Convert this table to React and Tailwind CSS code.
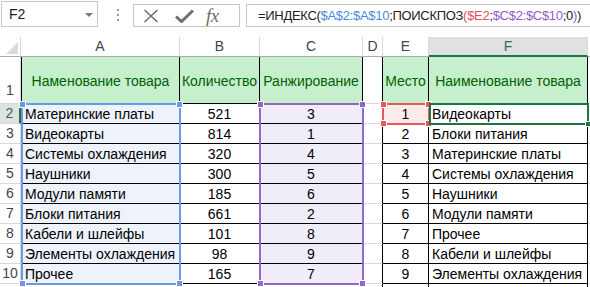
import React from 'react';

const leftRows = [
  ['Материнские платы', 521, 3],
  ['Видеокарты', 814, 1],
  ['Системы охлаждения', 320, 4],
  ['Наушники', 300, 5],
  ['Модули памяти', 185, 6],
  ['Блоки питания', 661, 2],
  ['Кабели и шлейфы', 101, 8],
  ['Элементы охлаждения', 98, 9],
  ['Прочее', 165, 7],
];

const rightRows = [
  'Видеокарты',
  'Блоки питания',
  'Материнские платы',
  'Системы охлаждения',
  'Наушники',
  'Модули памяти',
  'Прочее',
  'Кабели и шлейфы',
  'Элементы охлаждения',
];

const Handle = ({ className }) => (
  <div className={`absolute w-[7px] h-[7px] border border-white ${className}`} />
);

const FormulaBar = () => (
  <div className="flex h-[37px] items-start">
    {/* поле имени */}
    <div className="relative mt-px ml-px w-[97px] h-[26px] border border-[#c6c6c6] flex items-center pl-[7px] text-[14px] text-[#222]">
      F2
      <svg className="absolute right-[4px] top-[11px]" width="8" height="5" viewBox="0 0 8 5">
        <path d="M0 0h8L4 4z" fill="#7a7a7a" />
      </svg>
    </div>
    <div className="w-[35px] h-[30px] flex flex-col items-center justify-center gap-[3px] pl-[5px]">
      <div className="w-[2px] h-[2px] bg-[#9a9a9a]" />
      <div className="w-[2px] h-[2px] bg-[#9a9a9a]" />
      <div className="w-[2px] h-[2px] bg-[#9a9a9a]" />
    </div>
    {/* кнопки */}
    <div className="mt-[4px] w-[107px] h-[23px] border border-[#c6c6c6] flex items-center">
      <svg className="ml-[9px]" width="16" height="14" viewBox="0 0 16 14">
        <path d="M1.5 1L14.5 13M14.5 1L1.5 13" stroke="#6f6f6f" strokeWidth="1.6" fill="none" />
      </svg>
      <svg className="ml-[16px]" width="19" height="14" viewBox="0 0 19 14">
        <path d="M1 7.5L6.5 12.5L18 1.5" stroke="#6f6f6f" strokeWidth="3" fill="none" />
      </svg>
      <span className="ml-[12px] font-['Liberation_Serif',serif] italic text-[19px] leading-none text-[#6f6f6f] tracking-[-0.5px]">
        fx
      </span>
    </div>
    {/* строка формул */}
    <div className="mt-[4px] ml-[6px] flex-1 h-[23px] border border-r-0 border-[#c6c6c6] flex items-center pl-[11px] text-[13px] tracking-[-0.3px] text-[#222] whitespace-nowrap overflow-hidden">
      =ИНДЕКС(<span className="text-[#4f86e0]">$A$2:$A$10</span>;ПОИСКПОЗ
      <span className="text-[#e0505a]">(</span>
      <span className="text-[#e0505a]">$E2</span>;
      <span className="text-[#8e5cc9]">$C$2:$C$10</span>;0
      <span className="text-[#8e5cc9]">)</span>)
    </div>
  </div>
);

export default function App() {
  const colHead = 'flex items-center justify-center border-r border-b border-r-[#d9d9d9] border-b-[#ababab] text-[14px] text-[#444]';
  const rowHead = 'flex items-center justify-center border-r border-b border-[#d9d9d9] text-[14px] text-[#444]';
  const black = 'border-r border-b border-black';

  return (
    <div className="w-[590px] h-[287px] overflow-hidden bg-white font-['Liberation_Sans',Arial,sans-serif]">
      <FormulaBar />
      <div className="relative grid grid-cols-[21px_159px_80px_103px_20px_46px_159px_2px] grid-rows-[20px_47px_repeat(9,20px)_3px]">
        {/* заголовки столбцов */}
        <div className="relative border-r border-b border-r-[#d9d9d9] border-b-[#ababab]">
          <svg className="absolute right-[2px] bottom-[2px]" width="12" height="12" viewBox="0 0 12 12">
            <path d="M12 0V12H0z" fill="#dadada" />
          </svg>
        </div>
        <div className={colHead}>A</div>
        <div className={colHead}>B</div>
        <div className={colHead}>C</div>
        <div className={colHead}>D</div>
        <div className={colHead}>E</div>
        <div className="flex items-center justify-center border-r border-r-[#d9d9d9] border-b-2 border-b-[#217346] bg-[#e1e1e1] text-[14px] text-[#217346]">F</div>
        <div className="border-b border-[#ababab]" />

        {/* строка 1 */}
        <div className={`${rowHead} items-end pb-[2px]`}>1</div>
        <div className={`${black} border-l bg-[#c6efce] text-[#006100] text-[14px] flex items-center justify-center pt-[3px]`}>Наменование товара</div>
        <div className={`${black} bg-[#c6efce] text-[#006100] text-[14px] flex items-center justify-center pt-[3px]`}>Количество</div>
        <div className={`${black} bg-[#c6efce] text-[#006100] text-[14px] flex items-center justify-center pt-[3px]`}>Ранжирование</div>
        <div className="border-r border-r-black border-b border-b-[#d9d9d9]" />
        <div className={`${black} bg-[#c6efce] text-[#006100] text-[14px] flex items-center justify-center pt-[3px]`}>Место</div>
        <div className={`${black} bg-[#c6efce] text-[#006100] text-[14px] flex items-center justify-center pt-[3px]`}>Наименование товара</div>
        <div className="border-b border-[#d9d9d9]" />

        {leftRows.map(([name, qty, rank], i) => {
          const active = i === 0;
          return (
            <React.Fragment key={i}>
              <div
                className={
                  active
                    ? 'flex items-center justify-center border-b border-[#d9d9d9] border-r-2 border-r-[#217346] bg-[#e1e1e1] text-[14px] text-[#217346]'
                    : rowHead
                }
              >
                {i + 2}
              </div>
              <div className={`${black} border-l bg-[#eef3fb] text-[14px] text-black flex items-center pl-[3px] pt-px`}>{name}</div>
              <div className={`${black} text-[14px] text-black flex items-center justify-center pt-px`}>{qty}</div>
              <div className={`${black} bg-[#f1edf8] text-[14px] text-black flex items-center justify-center pt-px`}>{rank}</div>
              <div className="border-r border-r-black border-b border-b-[#d9d9d9]" />
              <div className={`${black} ${active ? 'bg-[#fcebeb]' : ''} text-[14px] text-black flex items-center justify-center pt-px`}>{i + 1}</div>
              <div className={`${black} text-[14px] text-black flex items-center pl-[3px] pt-px`}>{rightRows[i]}</div>
              <div className="border-b border-[#d9d9d9]" />
            </React.Fragment>
          );
        })}

        {/* нижний край */}
        <div className="border-r border-[#d9d9d9]" />
        <div className="border-r border-l border-black" />
        <div className="border-r border-black" />
        <div className="border-r border-black" />
        <div className="border-r border-black" />
        <div className="border-r border-black" />
        <div className="border-r border-black" />
        <div />

        {/* выделения диапазонов */}
        <div className="absolute left-[21px] top-[66px] w-[160px] h-[182px] border-2 border-[#6c98e8]">
          <Handle className="bg-[#6c98e8] -left-[4px] -top-[4px]" />
          <Handle className="bg-[#6c98e8] -right-[4px] -top-[4px]" />
          <Handle className="bg-[#6c98e8] -right-[4px] -bottom-[4px]" />
          <Handle className="bg-[#6c98e8] -left-[4px] -bottom-[4px]" />
        </div>
        <div className="absolute left-[259px] top-[66px] w-[105px] h-[182px] border-2 border-[#9466c8]">
          <Handle className="bg-[#9466c8] -left-[4px] -top-[4px]" />
          <Handle className="bg-[#9466c8] -right-[4px] -top-[4px]" />
          <Handle className="bg-[#9466c8] -right-[4px] -bottom-[4px]" />
          <Handle className="bg-[#9466c8] -left-[4px] -bottom-[4px]" />
        </div>
        <div className="absolute left-[382px] top-[66px] w-[48px] h-[22px] border-2 border-[#e6585e]">
          <Handle className="bg-[#e6585e] -left-[4px] -top-[4px]" />
          <Handle className="bg-[#e6585e] -right-[4px] -top-[4px]" />
          <Handle className="bg-[#e6585e] -right-[4px] -bottom-[4px]" />
          <Handle className="bg-[#e6585e] -left-[4px] -bottom-[4px]" />
        </div>
        <div className="absolute left-[429px] top-[66px] w-[160px] h-[22px] border-2 border-[#217346]">
          <div className="absolute -right-[4px] -bottom-[4px] w-[6px] h-[6px] bg-[#217346] border border-white" />
        </div>
      </div>
    </div>
  );
}
